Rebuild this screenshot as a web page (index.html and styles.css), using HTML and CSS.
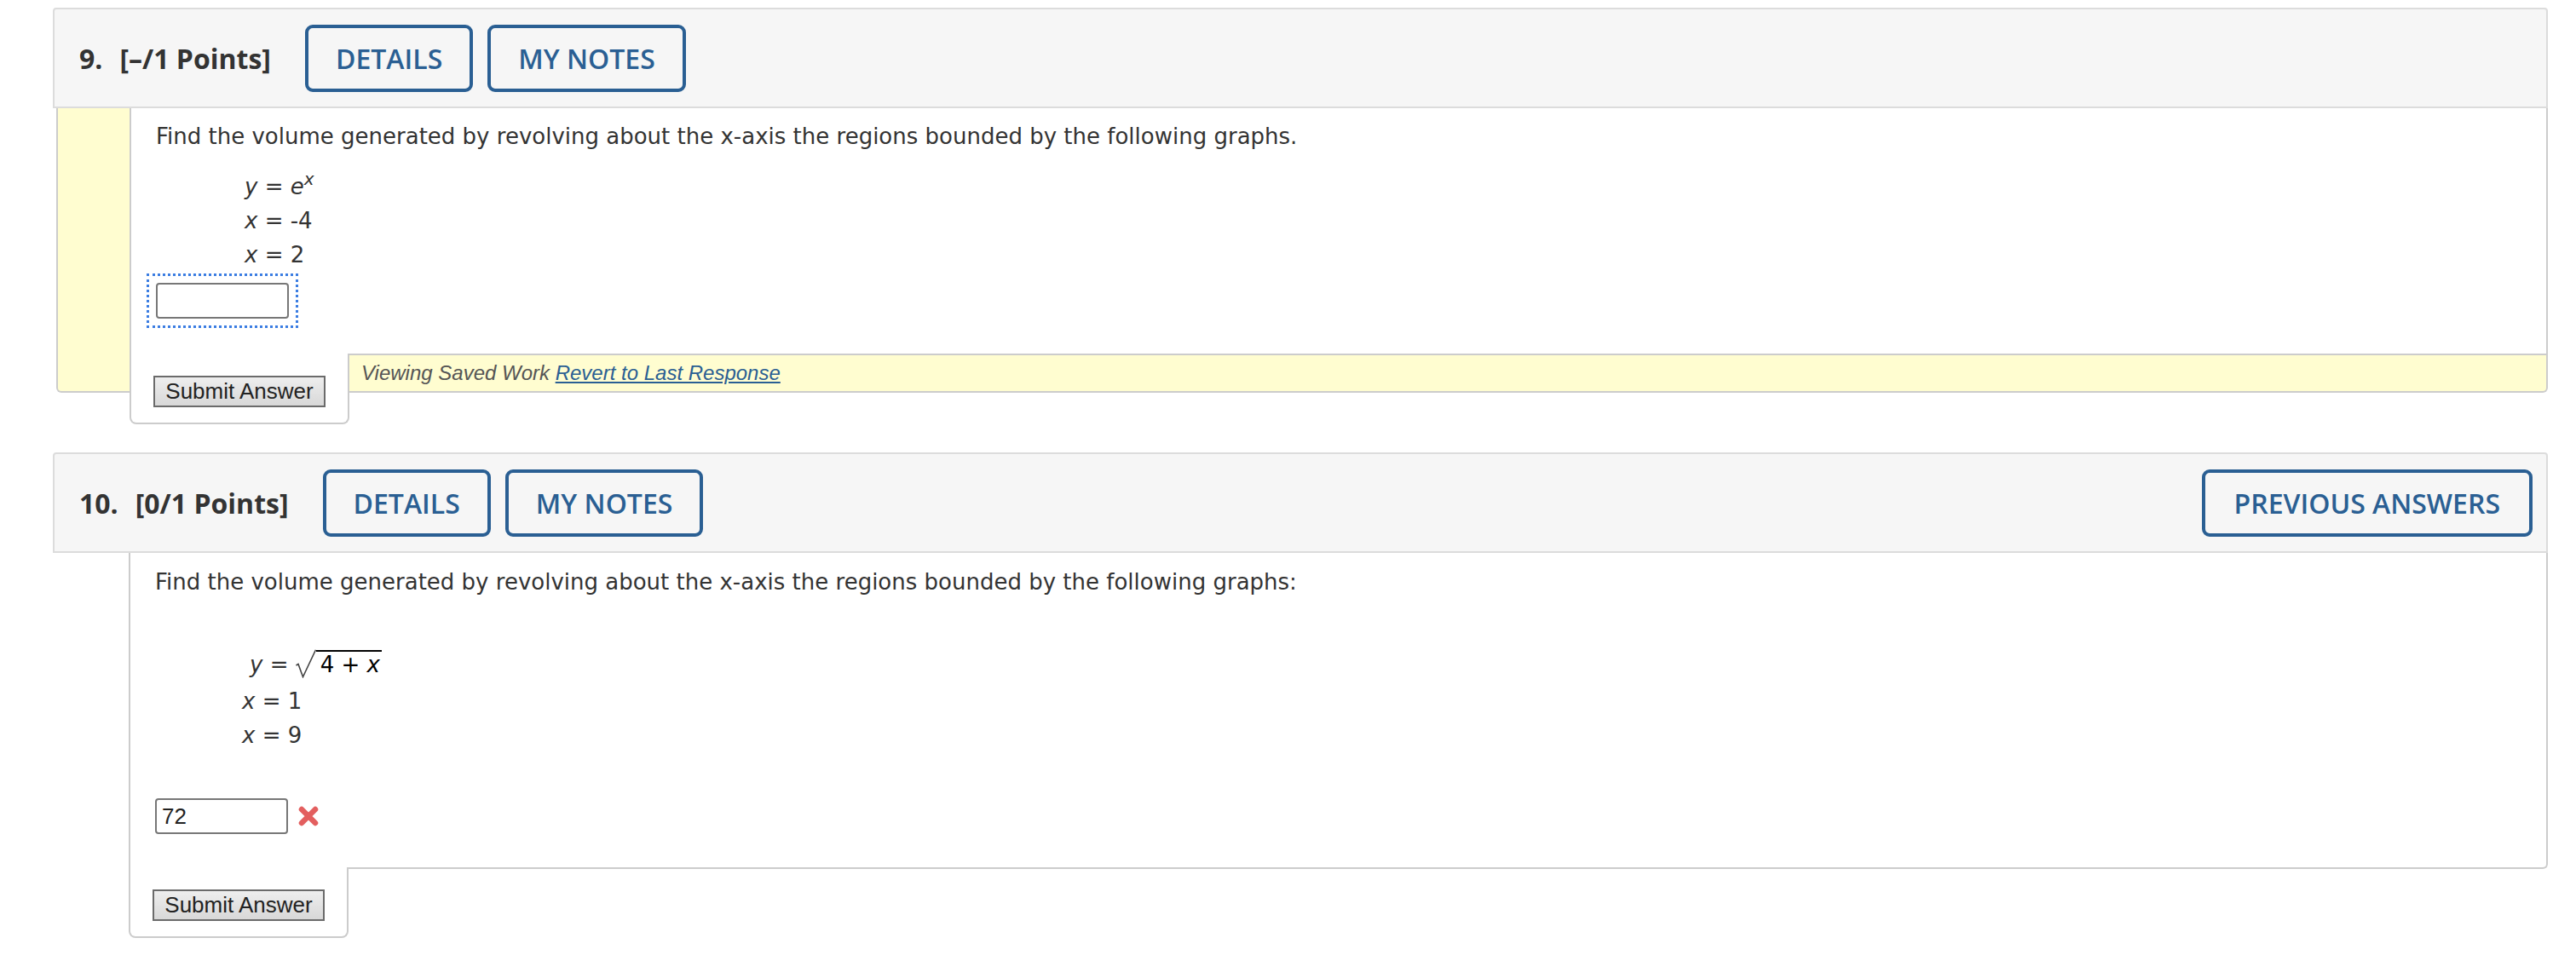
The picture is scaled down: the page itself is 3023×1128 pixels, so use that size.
FILE: index.html
```html
<!DOCTYPE html>
<html>
<head>
<meta charset="utf-8">
<title>Assignment</title>
<link rel="stylesheet" href="styles.css">
</head>
<body>
<div class="page">

    <div class="question">
        <div class="qhead">
            <span class="qnum">9.</span>
            <span class="points">[&ndash;/1 Points]</span>
            <a class="hbtn">DETAILS</a>
            <a class="hbtn">MY NOTES</a>
        </div>
        <div class="qframe saved">
            <div class="qbody">
                <p class="prompt">Find the volume generated by revolving about the x-axis the regions bounded by the following graphs.</p>
                <div class="eqs">
                    <div class="eq"><i>y</i> = <i>e</i><sup><i>x</i></sup></div>
                    <div class="eq"><i>x</i> = -4</div>
                    <div class="eq"><i>x</i> = 2</div>
                </div>
                <div class="answer">
                    <span class="focus"><input class="ans" type="text" value=""></span>
                </div>
            </div>
            <div class="qfoot">
                <div class="tab"><input class="submit" type="button" value="Submit Answer"></div>
                <div class="saved-bar">Viewing Saved Work <a class="revert">Revert to Last Response</a></div>
            </div>
        </div>
    </div>

    <div class="question">
        <div class="qhead">
            <span class="qnum">10.</span>
            <span class="points">[0/1 Points]</span>
            <a class="hbtn">DETAILS</a>
            <a class="hbtn">MY NOTES</a>
            <a class="hbtn prev">PREVIOUS ANSWERS</a>
        </div>
        <div class="qframe">
            <div class="qbody closed">
                <p class="prompt">Find the volume generated by revolving about the x-axis the regions bounded by the following graphs:</p>
                <div class="eqs roots">
                    <div class="eq tall"><i>y</i> = <span class="radical"><svg width="24" height="34" viewBox="0 0 24 34"><path d="M0.5 19 L3 17.5 L8.5 32.5 L23.5 0.8" fill="none" stroke="#444" stroke-width="1.6"/></svg><span class="radicand">4 + <i>x</i></span></span></div>
                    <div class="eq"><i>x</i> = 1</div>
                    <div class="eq"><i>x</i> = 9</div>
                </div>
                <div class="answer row">
                    <input class="ans" type="text" value="72">
                    <svg class="wrong" width="28" height="28" viewBox="0 0 28 28"><path d="M6 6 L22 22 M22 6 L6 22" stroke="#e35f5f" stroke-width="6.5" stroke-linecap="round"/></svg>
                </div>
            </div>
            <div class="qfoot">
                <div class="tab"><input class="submit" type="button" value="Submit Answer"></div>
            </div>
        </div>
    </div>

</div>
</body>
</html>
```

FILE: styles.css
```css
html, body {
    margin: 0;
    background: #fff;
}

.page {
    padding: 9px 33px 0 62px;
}

.question {
    margin-bottom: 70px;
}

.qhead {
    display: flex;
    align-items: center;
    height: 118px;
    box-sizing: border-box;
    padding: 0 16px 0 29px;
    background-color: #f6f6f6;
    border: 2px solid #dcdcdc;
    border-radius: 4px 4px 0 0;
    font-family: "Open Sans", "Liberation Sans", sans-serif;
    font-size: 32px;
    font-weight: 700;
    color: #333;
}

.qnum {
    margin-right: 20px;
}

.points {
    margin-right: 40px;
}

.hbtn {
    display: flex;
    align-items: center;
    height: 79px;
    box-sizing: border-box;
    padding: 0 32px;
    margin-right: 17px;
    border: 4px solid #2a5f93;
    border-radius: 9px;
    color: #2a5f93;
    font-weight: 600;
}

.hbtn.prev {
    margin-left: auto;
    margin-right: 0;
    padding: 0 34px;
}

.qframe {
    padding-left: 89px;
}

.qframe.saved {
    margin-left: 4px;
    padding-left: 84px;
    background-color: #fffdd0;
    border: 2px solid #cccccc;
    border-top: none;
    border-radius: 0 0 6px 6px;
}

.qbody {
    background: #fff;
    border-left: 2px solid #cccccc;
    border-bottom: 2px solid #cccccc;
    padding: 13px 0 30px 29px;
    font-family: "DejaVu Sans", Verdana, sans-serif;
    font-size: 26px;
    color: #333;
}

.qbody.closed {
    border-right: 2px solid #cccccc;
    border-bottom-right-radius: 6px;
    padding: 14px 0 39px 29px;
}

.prompt {
    margin: 0;
    line-height: 40px;
}

.eqs {
    margin-top: 19px;
    padding-left: 104px;
}

.eq {
    line-height: 40px;
    white-space: nowrap;
}

.eq sup {
    font-size: 20px;
    line-height: 0;
    vertical-align: 11px;
}

.eqs.roots {
    margin-top: 55px;
    padding-left: 102px;
}

.eq.tall {
    line-height: 45px;
    padding-left: 9px;
}

.radical {
    display: inline-block;
    position: relative;
    padding-left: 24px;
    line-height: 32px;
}

.radical svg {
    position: absolute;
    left: 0;
    top: -1px;
}

.radicand {
    display: inline-block;
    border-top: 2px solid #000;
    color: #000;
    padding: 0 2px 0 5px;
    line-height: 30px;
}

.answer {
    margin-top: 2px;
}

.answer.row {
    display: flex;
    align-items: center;
    margin-top: 54px;
}

.focus {
    display: inline-block;
    padding: 8px;
    margin-left: -11px;
    border: 3px dotted #3b7de2;
    line-height: 0;
}

.ans {
    width: 156px;
    height: 42px;
    box-sizing: border-box;
    margin: 0;
    padding: 0 6px;
    border: 2px solid #777;
    border-radius: 4px;
    font-family: "Liberation Sans", Arial, sans-serif;
    font-size: 26px;
    color: #222;
    background: #fff;
}

.wrong {
    margin-left: 10px;
}

.qfoot {
    display: flex;
    align-items: flex-start;
}

.tab {
    margin-top: -2px;
    padding: 26px 26px 18px 26px;
    background: #fff;
    border: 2px solid #cccccc;
    border-top: none;
    border-radius: 0 0 8px 8px;
}

.saved .tab {
    margin-bottom: -39px;
}

.submit {
    display: block;
    width: 202px;
    height: 37px;
    margin: 0;
    padding: 0;
    border: 2px solid #6b6b6b;
    border-radius: 0;
    background: linear-gradient(#eeeeee, #d8d8d8);
    font-family: "Liberation Sans", Arial, sans-serif;
    font-size: 26px;
    color: #222;
}

.saved-bar {
    flex: 1;
    height: 42px;
    line-height: 42px;
    padding-left: 14px;
    font-family: "Liberation Sans", Arial, sans-serif;
    font-size: 24px;
    font-style: italic;
    color: #555;
}

.revert {
    color: #2a5f93;
    text-decoration: underline;
}
```
